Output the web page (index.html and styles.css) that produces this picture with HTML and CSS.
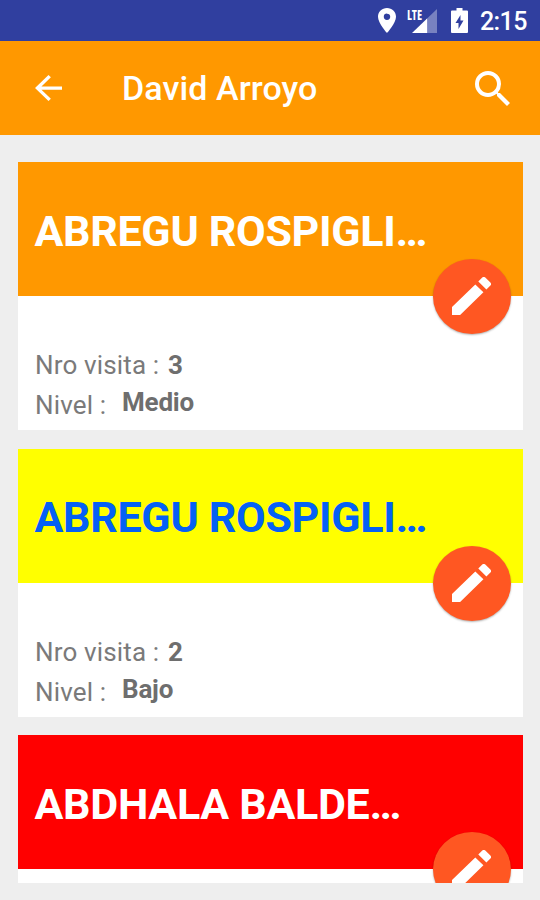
FILE: index.html
```html
<!DOCTYPE html>
<html lang="es">
<head>
  <meta charset="UTF-8" />
  <meta name="viewport" content="width=device-width, initial-scale=1.0" />
  <title>David Arroyo</title>
  <link rel="stylesheet" href="styles.css">
</head>
<body>
  <svg class="symbols" aria-hidden="true">
    <symbol id="pencil" viewBox="3 3 18 18" preserveAspectRatio="none">
      <path d="M3 17.250V21h3.750L17.500 10.250l-3.750-3.750L3 17.250zM20.710 7.040a1 1 0 0 0 0-1.410l-2.340-2.340a1 1 0 0 0-1.410 0l-1.830 1.830 3.750 3.750 1.830-1.830z"/>
    </symbol>
  </svg>

  <div class="status-bar">
    <svg class="status-pin" viewBox="5 2 14 20" preserveAspectRatio="none">
      <path d="M12 2C8.130 2 5 5.130 5 9c0 5.250 7 13 7 13s7-7.750 7-13c0-3.870-3.130-7-7-7zm0 9.500a2.500 2.500 0 1 1 0-5 2.500 2.500 0 0 1 0 5z"/>
    </svg>
    <div class="signal">
      <span class="signal-type">LTE</span>
      <svg class="signal-bars" viewBox="0 0 24 24" preserveAspectRatio="none">
        <path class="dim" d="M24 0v24H14V10z"/>
        <path d="M0 24L14.500 9.500V24z"/>
      </svg>
    </div>
    <svg class="status-battery" viewBox="0 0 17 25" preserveAspectRatio="none">
      <path fill-rule="evenodd" d="M5.500 0h6v2.500H16q1 0 1 1V24q0 1-1 1H1q-1 0-1-1V3.500q0-1 1-1h4.500zM9.500 7L4.500 15h3v6l5-8.500h-3z"/>
    </svg>
    <span class="clock">2:15</span>
  </div>

  <header class="app-bar">
    <svg class="back" viewBox="4 4 16 16" preserveAspectRatio="none">
      <path d="M20 11H7.830l5.590-5.590L12 4l-8 8 8 8 1.410-1.410L7.830 13H20v-2z"/>
    </svg>
    <h1 class="app-title">David Arroyo</h1>
    <svg class="search" viewBox="3 3 17.500 17.500" preserveAspectRatio="none">
      <path d="M15.500 14h-.79l-.28-.27A6.471 6.471 0 0 0 16 9.500 6.500 6.500 0 1 0 9.500 16c1.610 0 3.090-.59 4.230-1.570l.27.28v.79l5 4.990L20.490 19l-4.990-5zm-6 0C7.010 14 5 11.990 5 9.500S7.010 5 9.500 5 14 7.010 14 9.500 11.990 14 9.500 14z"/>
    </svg>
  </header>

  <main class="list">
    <article class="card medium">
      <div class="card-head">
        <h2 class="name">ABREGU ROSPIGLI…</h2>
        <button class="edit" aria-label="Editar"><svg><use href="#pencil"/></svg></button>
      </div>
      <div class="card-body">
        <div class="row"><span class="label visits">Nro visita :</span><b>3</b></div>
        <div class="row level"><span class="label">Nivel :</span><b>Medio</b></div>
      </div>
    </article>

    <article class="card low">
      <div class="card-head">
        <h2 class="name">ABREGU ROSPIGLI…</h2>
        <button class="edit" aria-label="Editar"><svg><use href="#pencil"/></svg></button>
      </div>
      <div class="card-body">
        <div class="row"><span class="label visits">Nro visita :</span><b>2</b></div>
        <div class="row level"><span class="label">Nivel :</span><b>Bajo</b></div>
      </div>
    </article>

    <article class="card high">
      <div class="card-head">
        <h2 class="name">ABDHALA BALDE…</h2>
        <button class="edit" aria-label="Editar"><svg><use href="#pencil"/></svg></button>
      </div>
      <div class="card-body"></div>
    </article>
  </main>
</body>
</html>
```
FILE: styles.css
```css
* {
  box-sizing: border-box;
}
body {
  margin: 0;
  height: 900px;
  display: flex;
  flex-direction: column;
  overflow: hidden;
  background: #eee;
  font-family: Roboto, sans-serif;
  color: #6e6e6e;
}
h1, h2 {
  margin: 0;
}
svg {
  display: block;
  fill: white;
}
.symbols {
  position: absolute;
  width: 0;
  height: 0;
}

/* status bar */
.status-bar {
  flex: none;
  height: 41px;
  padding: 0 13px 0 0;
  display: flex;
  justify-content: flex-end;
  align-items: center;
  background: #303f9f;
  color: white;
}
.status-pin {
  width: 18px;
  height: 25px;
  margin-right: 11px;
}
.signal {
  width: 30px;
  height: 24px;
  margin-right: 14px;
  position: relative;
  display: flex;
  justify-content: flex-end;
}
.signal-type {
  position: absolute;
  left: 0;
  top: 0;
  font: bold 15px/11px "Open Sans", sans-serif;
  transform: scaleX(0.8);
  transform-origin: left;
  font-stretch: condensed;
}
.signal-bars {
  width: 25px;
  height: 24px;
}
.signal-bars .dim {
  opacity: 0.35;
}
.status-battery {
  width: 17px;
  height: 25px;
  margin-right: 12px;
}
.clock {
  width: 47px;
  padding-top: 2px;
  font-size: 25px;
  font-weight: 500;
  letter-spacing: -0.6px;
  line-height: 41px;
  white-space: nowrap;
}

/* toolbar */
.app-bar {
  flex: none;
  height: 94px;
  padding: 0 30px 0 35px;
  display: flex;
  align-items: center;
  background: #ff9800;
  color: white;
}
.back {
  width: 27px;
  height: 26px;
}
.app-title {
  flex: 1;
  margin-left: 60px;
  font-size: 34px;
  font-weight: 500;
  letter-spacing: 0.1px;
  line-height: 40px;
}
.search {
  width: 35px;
  height: 35px;
}

/* visits */
.list {
  height: 721px;
  margin: 27px 17px 0 18px;
  display: flex;
  flex-direction: column;
  gap: 18.700px;
  overflow: hidden;
}
.card {
  flex: none;
  height: 268px;
  background: white;
}
.card-head {
  position: relative;
  height: 134px;
  padding: 0 16.500px;
  display: flex;
  align-items: center;
  color: white;
}
.medium .card-head {
  background: #ff9800;
}
.low .card-head {
  background: #ff0;
  color: #0560f5;
}
.high .card-head {
  background: #f00;
}
.name {
  padding-top: 3px;
  font-size: 43px;
  font-weight: 700;
  letter-spacing: -0.3px;
  line-height: 50px;
  white-space: nowrap;
}
.edit {
  position: absolute;
  right: 12px;
  bottom: -38px;
  width: 78px;
  height: 75px;
  padding: 0 1px 1px 0;
  border: 0;
  border-radius: 50%;
  display: grid;
  place-items: center;
  background: #ff5722;
  box-shadow: 0 1px 2px rgba(0, 0, 0, 0.3);
}
.edit svg {
  width: 39px;
  height: 38px;
}
.card-body {
  padding: 53px 17px 0;
  font-size: 26px;
  line-height: 32px;
}
.row {
  display: flex;
}
.row b {
  font-weight: 700;
  letter-spacing: -0.2px;
}
.label {
  color: #7a7a7a;
  letter-spacing: 0.15px;
}
.visits {
  width: 133px;
}
.level {
  margin-top: 5px;
}
.level .label {
  width: 87px;
  padding-top: 3px;
}
```
